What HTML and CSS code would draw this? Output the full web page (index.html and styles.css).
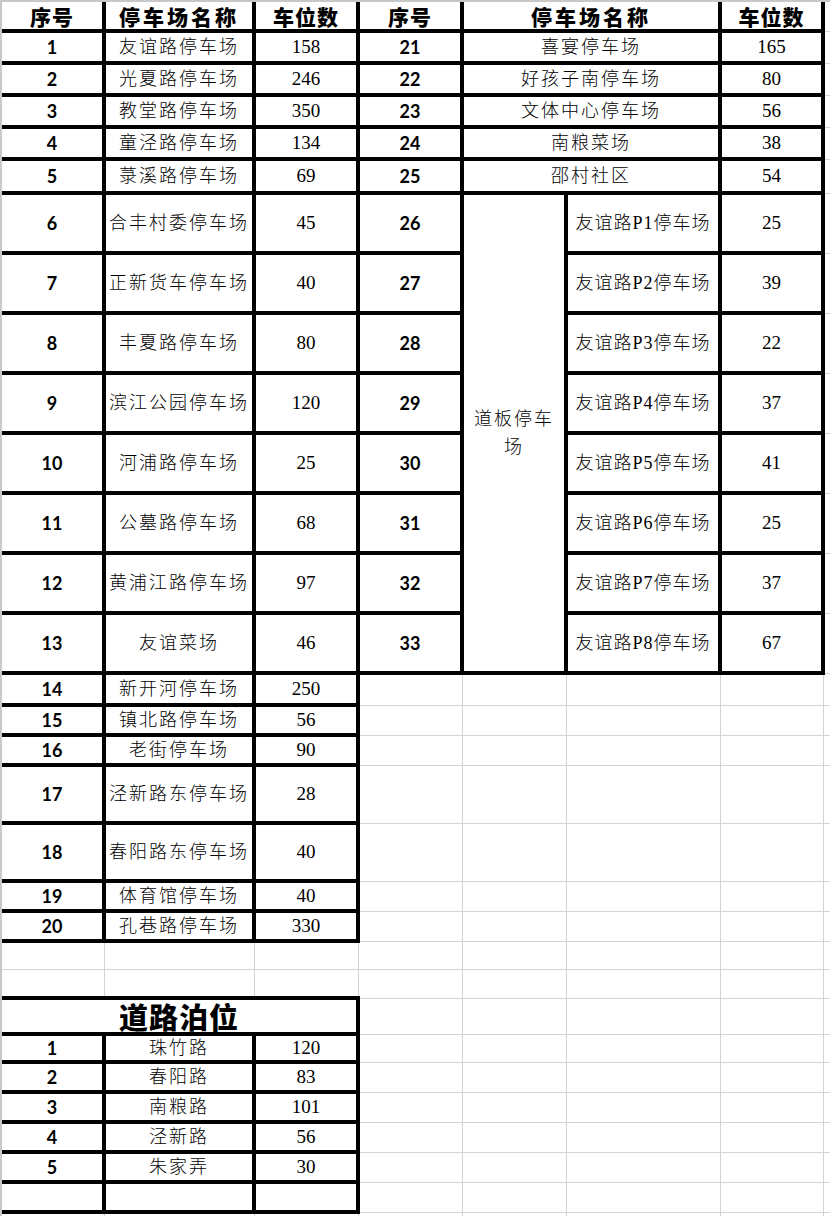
FILE: index.html
```html
<!DOCTYPE html>
<html lang="zh-CN">
<head>
<meta charset="utf-8">
<title>停车场车位统计</title>
<link rel="stylesheet" href="styles.css">
</head>
<body>
<div class="sheet">
<span class="row-marker"></span>
<table class="grid">
<colgroup>
<col class="c-a"><col class="c-b"><col class="c-c"><col class="c-d"><col class="c-e"><col class="c-f"><col class="c-g"><col class="c-h">
</colgroup>
<tbody>
<tr class="r-head">
<td class="b h">序号</td><td class="b h wide">停车场名称</td><td class="b h">车位数</td>
<td class="b h">序号</td><td class="b h wide" colspan="2">停车场名称</td><td class="b h">车位数</td><td></td>
</tr>
<tr class="r32">
<td class="b n">1</td><td class="b t">友谊路停车场</td><td class="b v">158</td>
<td class="b n">21</td><td class="b t" colspan="2">喜宴停车场</td><td class="b v">165</td><td></td>
</tr>
<tr class="r32">
<td class="b n">2</td><td class="b t">光夏路停车场</td><td class="b v">246</td>
<td class="b n">22</td><td class="b t" colspan="2">好孩子南停车场</td><td class="b v">80</td><td></td>
</tr>
<tr class="r32">
<td class="b n">3</td><td class="b t">教堂路停车场</td><td class="b v">350</td>
<td class="b n">23</td><td class="b t" colspan="2">文体中心停车场</td><td class="b v">56</td><td></td>
</tr>
<tr class="r32">
<td class="b n">4</td><td class="b t">童泾路停车场</td><td class="b v">134</td>
<td class="b n">24</td><td class="b t" colspan="2">南粮菜场</td><td class="b v">38</td><td></td>
</tr>
<tr class="r34">
<td class="b n">5</td><td class="b t">菉溪路停车场</td><td class="b v">69</td>
<td class="b n">25</td><td class="b t" colspan="2">邵村社区</td><td class="b v">54</td><td></td>
</tr>
<tr class="r60">
<td class="b n">6</td><td class="b t">合丰村委停车场</td><td class="b v">45</td>
<td class="b n">26</td><td class="b t merged" rowspan="8">道板停车<br>场</td><td class="b t p">友谊路P1停车场</td><td class="b v">25</td><td></td>
</tr>
<tr class="r60">
<td class="b n">7</td><td class="b t">正新货车停车场</td><td class="b v">40</td>
<td class="b n">27</td><td class="b t p">友谊路P2停车场</td><td class="b v">39</td><td></td>
</tr>
<tr class="r60">
<td class="b n">8</td><td class="b t">丰夏路停车场</td><td class="b v">80</td>
<td class="b n">28</td><td class="b t p">友谊路P3停车场</td><td class="b v">22</td><td></td>
</tr>
<tr class="r60">
<td class="b n">9</td><td class="b t">滨江公园停车场</td><td class="b v">120</td>
<td class="b n">29</td><td class="b t p">友谊路P4停车场</td><td class="b v">37</td><td></td>
</tr>
<tr class="r60">
<td class="b n">10</td><td class="b t">河浦路停车场</td><td class="b v">25</td>
<td class="b n">30</td><td class="b t p">友谊路P5停车场</td><td class="b v">41</td><td></td>
</tr>
<tr class="r60">
<td class="b n">11</td><td class="b t">公墓路停车场</td><td class="b v">68</td>
<td class="b n">31</td><td class="b t p">友谊路P6停车场</td><td class="b v">25</td><td></td>
</tr>
<tr class="r60">
<td class="b n">12</td><td class="b t">黄浦江路停车场</td><td class="b v">97</td>
<td class="b n">32</td><td class="b t p">友谊路P7停车场</td><td class="b v">37</td><td></td>
</tr>
<tr class="r60">
<td class="b n">13</td><td class="b t">友谊菜场</td><td class="b v">46</td>
<td class="b n">33</td><td class="b t p">友谊路P8停车场</td><td class="b v">67</td><td></td>
</tr>
<tr class="r32">
<td class="b n">14</td><td class="b t">新开河停车场</td><td class="b v">250</td>
<td></td><td></td><td></td><td></td><td></td>
</tr>
<tr class="r30">
<td class="b n">15</td><td class="b t">镇北路停车场</td><td class="b v">56</td>
<td></td><td></td><td></td><td></td><td></td>
</tr>
<tr class="r30">
<td class="b n">16</td><td class="b t">老街停车场</td><td class="b v">90</td>
<td></td><td></td><td></td><td></td><td></td>
</tr>
<tr class="r58">
<td class="b n">17</td><td class="b t">泾新路东停车场</td><td class="b v">28</td>
<td></td><td></td><td></td><td></td><td></td>
</tr>
<tr class="r58">
<td class="b n">18</td><td class="b t">春阳路东停车场</td><td class="b v">40</td>
<td></td><td></td><td></td><td></td><td></td>
</tr>
<tr class="r30">
<td class="b n">19</td><td class="b t">体育馆停车场</td><td class="b v">40</td>
<td></td><td></td><td></td><td></td><td></td>
</tr>
<tr class="r30">
<td class="b n">20</td><td class="b t">孔巷路停车场</td><td class="b v">330</td>
<td></td><td></td><td></td><td></td><td></td>
</tr>
<tr class="r-empty">
<td></td><td></td><td></td><td></td><td></td><td></td><td></td><td></td>
</tr>
<tr class="r-empty">
<td></td><td></td><td></td><td></td><td></td><td></td><td></td><td></td>
</tr>
<tr class="r36">
<td class="b title" colspan="3">道路泊位</td>
<td></td><td></td><td></td><td></td><td></td>
</tr>
<tr class="r28">
<td class="b n">1</td><td class="b t">珠竹路</td><td class="b v">120</td>
<td></td><td></td><td></td><td></td><td></td>
</tr>
<tr class="r30">
<td class="b n">2</td><td class="b t">春阳路</td><td class="b v">83</td>
<td></td><td></td><td></td><td></td><td></td>
</tr>
<tr class="r30">
<td class="b n">3</td><td class="b t">南粮路</td><td class="b v">101</td>
<td></td><td></td><td></td><td></td><td></td>
</tr>
<tr class="r30">
<td class="b n">4</td><td class="b t">泾新路</td><td class="b v">56</td>
<td></td><td></td><td></td><td></td><td></td>
</tr>
<tr class="r30">
<td class="b n">5</td><td class="b t">朱家弄</td><td class="b v">30</td>
<td></td><td></td><td></td><td></td><td></td>
</tr>
<tr class="r30">
<td class="b"></td><td class="b"></td><td class="b"></td>
<td></td><td></td><td></td><td></td><td></td>
</tr>
<tr class="r30">
<td></td><td></td><td></td><td></td><td></td><td></td><td></td><td></td>
</tr>
</tbody>
</table>
</div>
</body>
</html>
```
FILE: styles.css
```css
html, body {
  margin: 0;
  padding: 0;
  background: #fff;
  overflow: hidden;
}

.sheet {
  position: relative;
  width: 828px;
  height: 1214px;
  border-left: 2px solid #c8c8c8;
  border-top: 2px solid #c8c8c8;
  overflow: hidden;
}

.row-marker {
  position: absolute;
  left: -2px;
  top: 1150px;
  width: 2px;
  height: 32px;
  background: #217346;
}

.grid {
  border-collapse: collapse;
  table-layout: fixed;
  width: 841px;
  color: #000;
}

.c-a { width: 102px; }
.c-b { width: 150px; }
.c-c { width: 104px; }
.c-d { width: 104px; }
.c-e { width: 104px; }
.c-f { width: 154px; }
.c-g { width: 103px; }
.c-h { width: 20px; }

.grid td {
  border: 1px solid #d4d4d4;
  padding: 0;
  text-align: center;
  vertical-align: middle;
  white-space: nowrap;
  overflow: visible;
}

.grid td.b {
  border: 4px solid #000;
}

.grid tr td:first-child {
  border-left: 0;
}

.grid .r-head td {
  border-top: 0;
}

.r-head td { height: 27px; }
.r28 td { height: 24px; }
.r30 td { height: 26px; }
.r32 td { height: 28px; }
.r34 td { height: 30px; }
.r36 td { height: 32px; }
.r58 td { height: 54px; }
.r60 td { height: 56px; }
.r-empty td { height: 26px; }

.h {
  font-family: "Noto Sans CJK SC", sans-serif;
  font-weight: 900;
  font-size: 21px;
  line-height: 24px;
  letter-spacing: 1px;
}

.h.wide {
  letter-spacing: 3px;
}

.n {
  font-family: Lato, "Liberation Sans", sans-serif;
  font-weight: 700;
  font-size: 18px;
  line-height: 20px;
  padding-top: 6px;
}

.t {
  font-family: "Liberation Serif", "Noto Sans CJK SC", serif;
  font-size: 18px;
  font-weight: 300;
  line-height: 20px;
  letter-spacing: 2px;
  padding-top: 7px;
}

.t.p {
  letter-spacing: 1px;
}

.t.merged {
  white-space: normal;
  line-height: 28px;
  padding-top: 0;
}

.v {
  font-family: "Liberation Serif", serif;
  font-size: 19px;
  line-height: 20px;
  padding-top: 6px;
}

.title {
  font-family: "Noto Sans CJK SC", sans-serif;
  font-weight: 900;
  font-size: 29px;
  line-height: 30px;
  letter-spacing: 1px;
}
```
